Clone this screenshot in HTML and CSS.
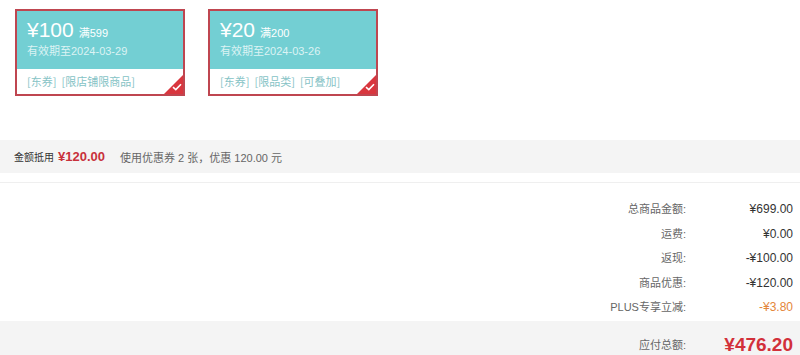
FILE: index.html
```html
<!DOCTYPE html>
<html lang="zh-CN">
<head>
    <meta charset="UTF-8">
    <meta name="viewport" content="width=device-width, initial-scale=1.0">
    <title>结算 - 优惠券</title>
    <link rel="stylesheet" href="styles.css">
</head>
<body>
    <div class="coupons">
        <div class="coupon">
            <div class="coupon-top">
                <div class="coupon-price"><span class="big">¥100</span><span class="quota">满599</span></div>
                <div class="coupon-date">有效期至2024-03-29</div>
            </div>
            <div class="coupon-tags">
                <span>[东券]</span><span>[限店铺限商品]</span>
                <span class="corner"><svg width="10" height="8" viewBox="0 0 10 8"><path d="M1 4.2 L3.8 6.6 L9 1.2" fill="none" stroke="#fff" stroke-width="1.6"/></svg></span>
            </div>
        </div>
        <div class="coupon">
            <div class="coupon-top">
                <div class="coupon-price"><span class="big">¥20</span><span class="quota">满200</span></div>
                <div class="coupon-date">有效期至2024-03-26</div>
            </div>
            <div class="coupon-tags">
                <span>[东券]</span><span>[限品类]</span><span>[可叠加]</span>
                <span class="corner"><svg width="10" height="8" viewBox="0 0 10 8"><path d="M1 4.2 L3.8 6.6 L9 1.2" fill="none" stroke="#fff" stroke-width="1.6"/></svg></span>
            </div>
        </div>
    </div>

    <div class="amount-bar">
        <span class="amount-label">金额抵用</span>
        <span class="amount-value">¥120.00</span>
        <span class="amount-note">使用优惠券 2 张，优惠 120.00 元</span>
    </div>

    <div class="summary">
        <div class="row"><span class="label">总商品金额:</span><span class="value">¥699.00</span></div>
        <div class="row"><span class="label">运费:</span><span class="value">¥0.00</span></div>
        <div class="row"><span class="label">返现:</span><span class="value">-¥100.00</span></div>
        <div class="row"><span class="label">商品优惠:</span><span class="value">-¥120.00</span></div>
        <div class="row"><span class="label">PLUS专享立减:</span><span class="value orange">-¥3.80</span></div>
    </div>

    <div class="total-bar">
        <span class="label">应付总额:</span><span class="total">¥476.20</span>
    </div>
</body>
</html>
```

FILE: styles.css
```css
body {
    margin: 0;
    font-family: "Liberation Sans", "Noto Sans CJK SC", sans-serif;
    font-size: 12px;
    color: #333;
    background: #fff;
    height: 355px;
    overflow: hidden;
}
.coupons {
    display: flex;
    gap: 23px;
    padding: 9px 0 0 15px;
    height: 131px;
}
.coupon {
    width: 166px;
    height: 83px;
    border: 2px solid #bf4650;
}
.coupon-top {
    background-color: #73cfd3;
    height: 58px;
    padding: 0 10px;
    color: #fff;
    box-sizing: border-box;
}
.coupon-price {
    padding-top: 4px;
    height: 29px;
    line-height: 29px;
}
.coupon-price .big {
    font-size: 21px;
}
.coupon-price .quota {
    font-size: 11px;
    margin-left: 5px;
}
.coupon-date {
    font-size: 11px;
    color: #dcf3f4;
    line-height: 14px;
}
.coupon-tags {
    position: relative;
    height: 25px;
    line-height: 24px;
    padding: 0 10px;
    color: #86c3c6;
    font-family: "Noto Sans CJK SC", sans-serif;
    font-size: 11px;
    display: flex;
    gap: 5px;
}
.corner {
    position: absolute;
    right: 0;
    bottom: 0;
    width: 0;
    height: 0;
    border-left: 19px solid transparent;
    border-bottom: 19px solid #d9363e;
}
.corner svg {
    position: absolute;
    left: -11px;
    top: 8px;
}
.amount-bar {
    height: 33px;
    background-color: #f4f4f4;
    display: flex;
    align-items: center;
    padding-left: 14px;
}
.amount-label {
    font-family: "Noto Sans CJK SC", sans-serif;
    color: #333;
    font-size: 10px;
}
.amount-value {
    color: #c8313b;
    font-weight: bold;
    font-size: 13px;
    margin-left: 4px;
}
.amount-note {
    color: #666;
    font-size: 11px;
    margin-left: 15px;
}
.summary {
    margin-top: 9px;
    border-top: 1px solid #efefef;
    padding: 14px 7px 0 0;
}
.row {
    display: flex;
    justify-content: flex-end;
    line-height: 24.5px;
}
.row .label {
    color: #666;
    font-size: 11px;
}
.row .value {
    width: 107px;
    text-align: right;
    color: #333;
}
.row .orange {
    color: #e4863a;
}
.total-bar {
    margin-top: 1px;
    background-color: #f4f4f4;
    height: 40px;
    display: flex;
    justify-content: flex-end;
    align-items: center;
    padding: 7px 7px 0 0;
    box-sizing: border-box;
}
.total-bar .label {
    color: #666;
    font-size: 11px;
}
.total-bar .total {
    width: 107px;
    text-align: right;
    color: #d2303a;
    font-weight: bold;
    font-size: 19px;
    line-height: 19px;
}
```
